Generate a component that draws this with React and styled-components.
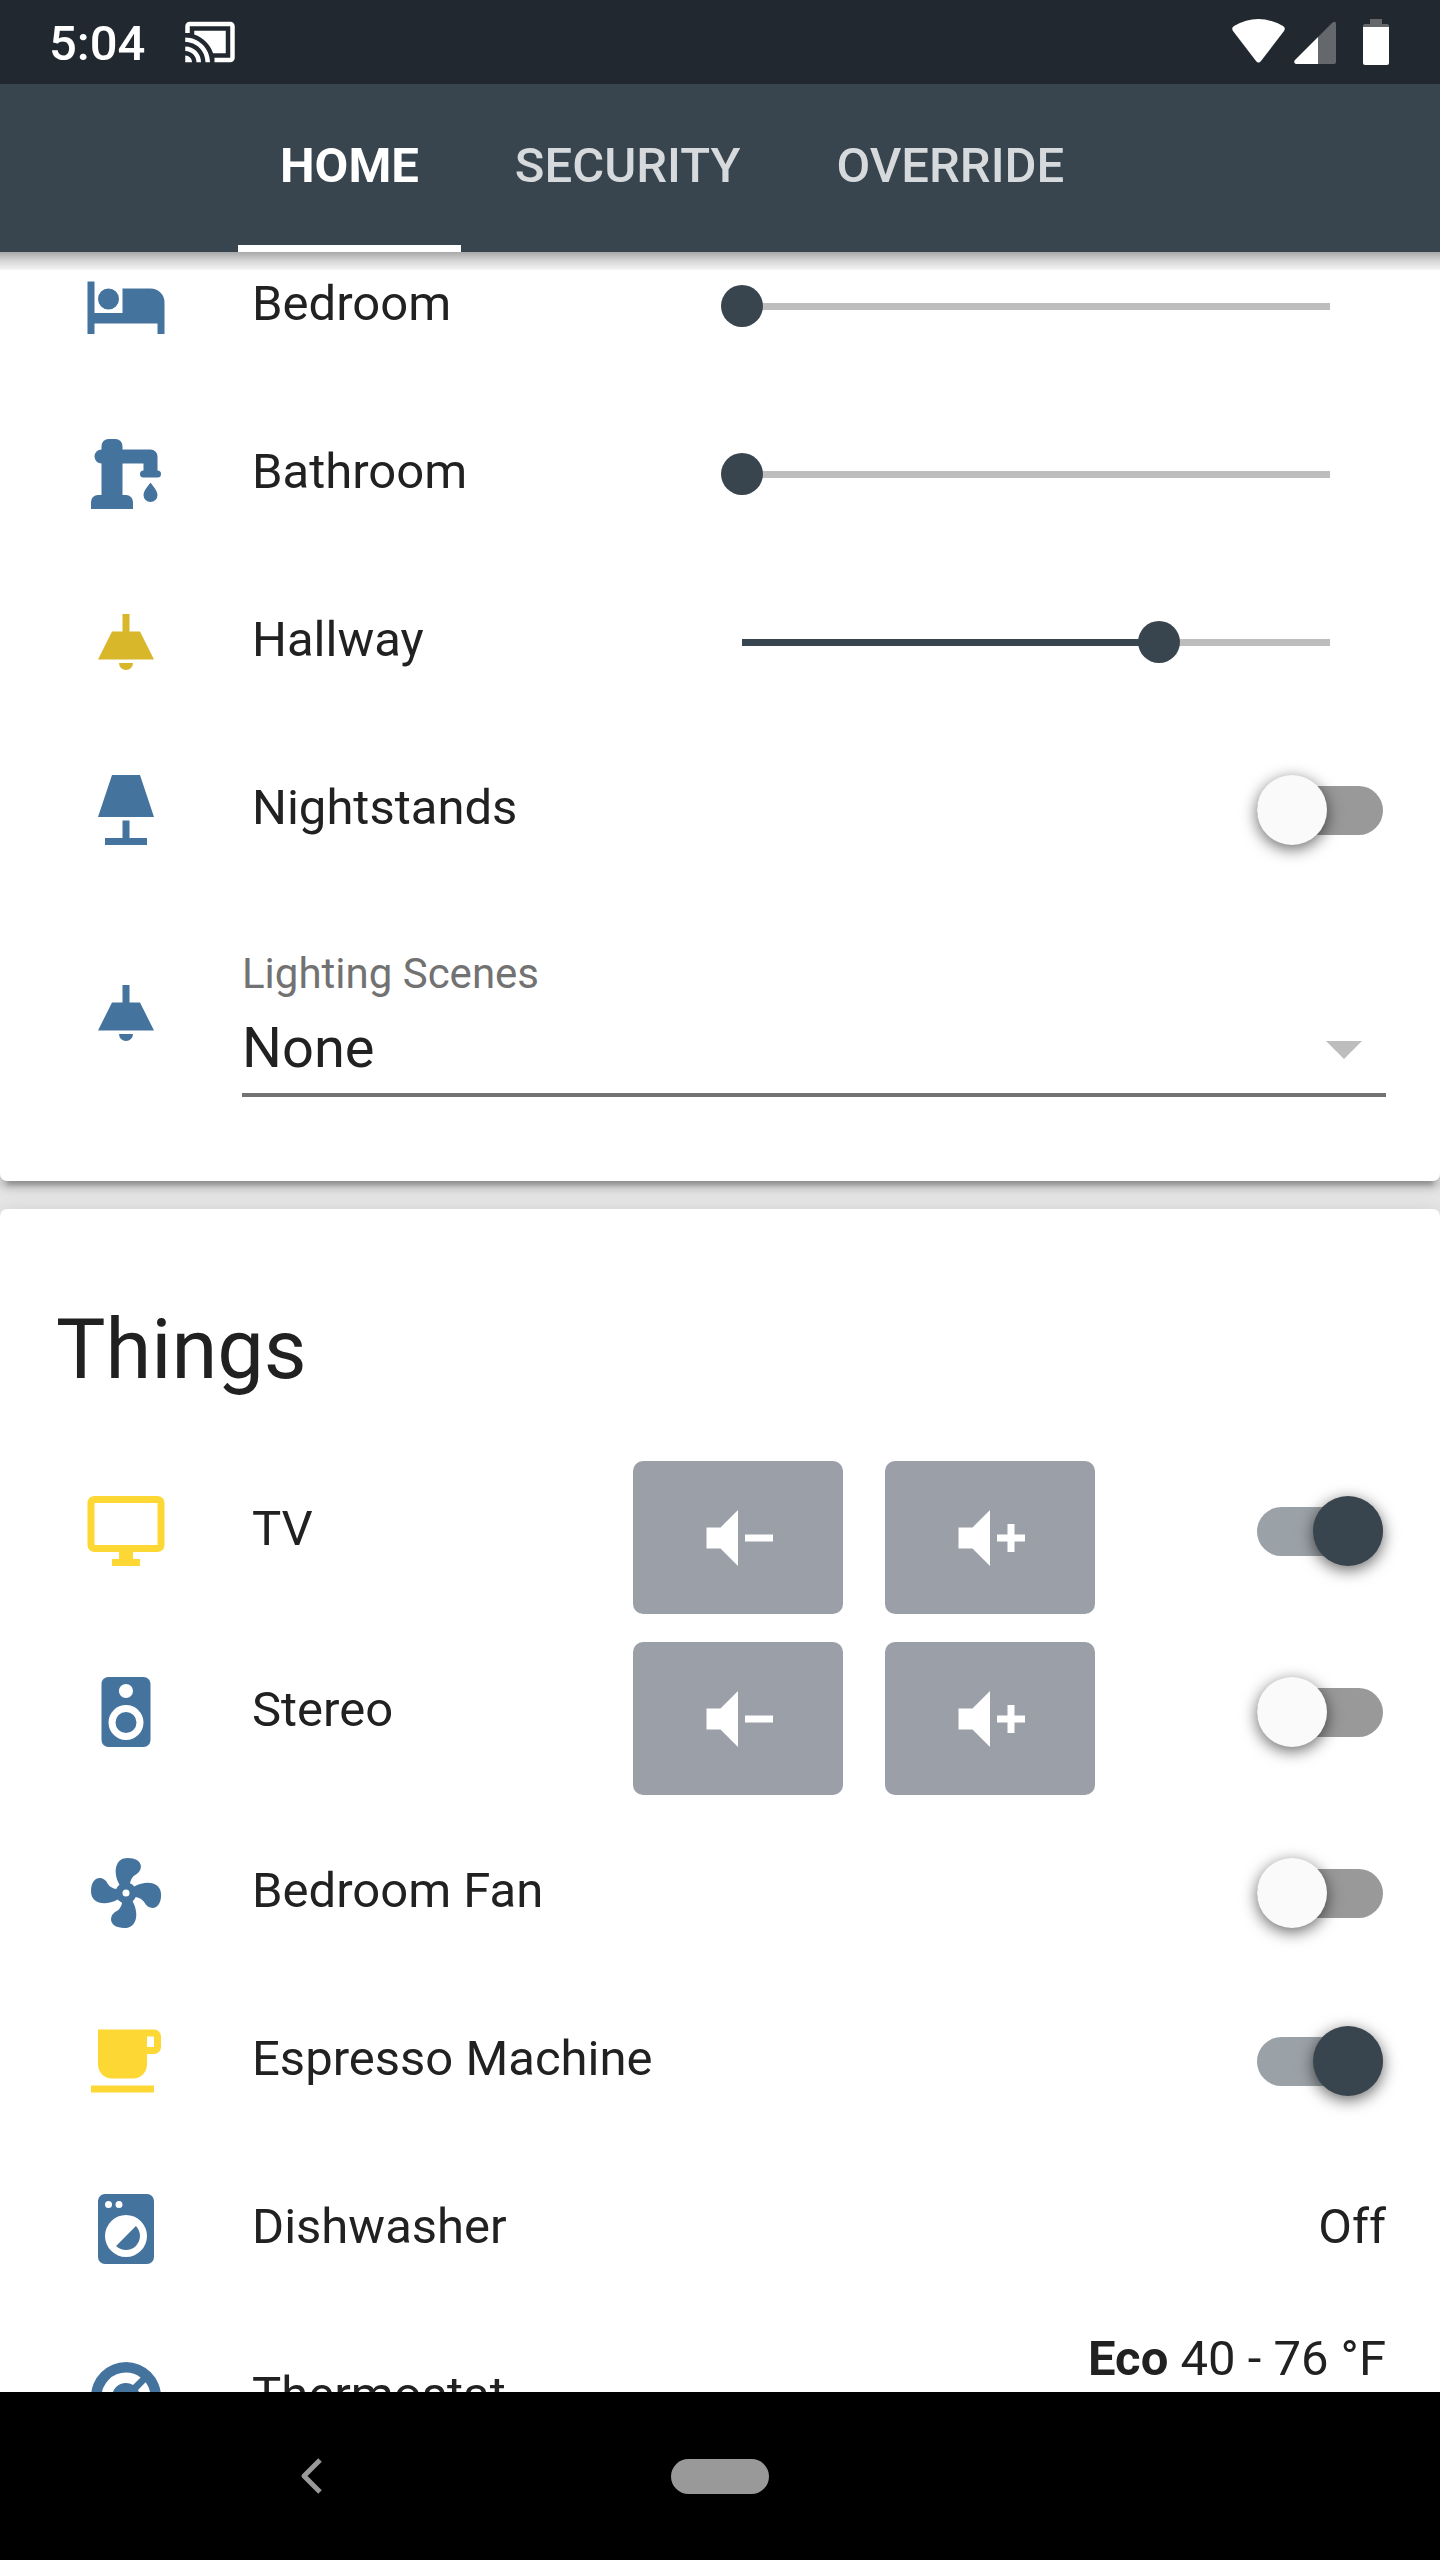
import React, { useState } from "react";
import styled, { createGlobalStyle } from "styled-components";

const color = {
  primary: "#38454f",
  statusBar: "#21282f",
  page: "#e5e5e5",
  text: "#212121",
  secondary: "#727272",
  idle: "#44739e",
  active: "#fdd835",
  dimmed: "#d8b72b",
  track: "#bdbdbd",
};

const GlobalStyle = createGlobalStyle`
  *, *::before, *::after { box-sizing: border-box; }
  body {
    margin: 0;
    background: ${color.page};
    color: ${color.text};
    font-family: Roboto, "Liberation Sans", sans-serif;
    font-size: 49px;
  }
  button, input, select { margin: 0; font: inherit; color: inherit; }
`;

const paths = {
  bed: "M19,7H11V14H3V5H1V20H3V17H21V20H23V11A4,4 0 0,0 19,7M7,13A3,3 0 0,0 10,10A3,3 0 0,0 7,7A3,3 0 0,0 4,10A3,3 0 0,0 7,13Z",
  pump: "M19,14.5C19,14.5 21,16.67 21,18A2,2 0 0,1 19,20A2,2 0 0,1 17,18C17,16.67 19,14.5 19,14.5M5,18V9A2,2 0 0,1 3,7A2,2 0 0,1 5,5V4A2,2 0 0,1 7,2H9A2,2 0 0,1 11,4V5H19A2,2 0 0,1 21,7V9L21,11A1,1 0 0,1 22,12A1,1 0 0,1 21,13H17A1,1 0 0,1 16,12A1,1 0 0,1 17,11V9H11V18H12A2,2 0 0,1 14,20V22H2V20A2,2 0 0,1 4,18H5Z",
  ceiling: "M8,9H11V4H13V9H16L20,17H4L8,9M14,18A2,2 0 0,1 12,20A2,2 0 0,1 10,18H14Z",
  lamp: "M8,2H16L20,14H4L8,2M11,15H13V20H18V22H6V20H11V15Z",
  monitor: "M21,16H3V4H21M21,2H3C1.89,2 1,2.89 1,4V16A2,2 0 0,0 3,18H10V20H8V22H16V20H14V18H21A2,2 0 0,0 23,16V4C23,2.89 22.1,2 21,2Z",
  speaker: "M12,12A3,3 0 0,0 9,15A3,3 0 0,0 12,18A3,3 0 0,0 15,15A3,3 0 0,0 12,12M12,20A5,5 0 0,1 7,15A5,5 0 0,1 12,10A5,5 0 0,1 17,15A5,5 0 0,1 12,20M12,4A2,2 0 0,1 14,6A2,2 0 0,1 12,8C10.89,8 10,7.1 10,6C10,4.89 10.89,4 12,4M17,2H7C5.89,2 5,2.89 5,4V20A2,2 0 0,0 7,22H17A2,2 0 0,0 19,20V4C19,2.89 18.1,2 17,2Z",
  fan: "M12,11A1,1 0 0,0 11,12A1,1 0 0,0 12,13A1,1 0 0,0 13,12A1,1 0 0,0 12,11M12.5,2C17,2 17.11,5.57 14.75,6.75C13.76,7.24 13.32,8.29 13.13,9.22C13.61,9.42 14.03,9.73 14.35,10.13C18.05,8.13 22.03,8.92 22.03,12.5C22.03,17 18.46,17.1 17.28,14.73C16.78,13.74 15.72,13.3 14.79,13.11C14.59,13.59 14.28,14 13.88,14.34C15.87,18.03 15.08,22 11.5,22C7,22 6.91,18.42 9.27,17.24C10.25,16.75 10.69,15.71 10.89,14.79C10.4,14.59 9.97,14.27 9.65,13.87C5.96,15.85 2,15.07 2,11.5C2,7 5.56,6.89 6.74,9.26C7.24,10.25 8.29,10.68 9.22,10.87C9.41,10.39 9.73,9.97 10.14,9.65C8.15,5.96 8.94,2 12.5,2Z",
  coffee: "M2,21H20V19H2M20,8H18V5H20M20,3H4V13A4,4 0 0,0 8,17H14A4,4 0 0,0 18,13V10H20A2,2 0 0,0 22,8V5C22,3.89 21.1,3 20,3Z",
  washer: "M14.83,11.17C16.39,12.73 16.39,15.27 14.83,16.83C13.27,18.39 10.73,18.39 9.17,16.83L14.83,11.17M6,2H18A2,2 0 0,1 20,4V20A2,2 0 0,1 18,22H6A2,2 0 0,1 4,20V4A2,2 0 0,1 6,2M7,4A1,1 0 0,0 6,5A1,1 0 0,0 7,6A1,1 0 0,0 8,5A1,1 0 0,0 7,4M10,4A1,1 0 0,0 9,5A1,1 0 0,0 10,6A1,1 0 0,0 11,5A1,1 0 0,0 10,4M12,8A6,6 0 0,0 6,14A6,6 0 0,0 12,20A6,6 0 0,0 18,14A6,6 0 0,0 12,8Z",
  thermostat: "M16.95,16.95L14.83,14.83C15.55,14.1 16,13.1 16,12C16,11.26 15.79,10.57 15.43,10L17.6,7.81C18.5,9 19,10.43 19,12C19,13.93 18.22,15.68 16.95,16.95M12,5C13.57,5 15,5.5 16.19,6.4L14,8.56C13.43,8.21 12.74,8 12,8A4,4 0 0,0 8,12C8,13.1 8.45,14.1 9.17,14.83L7.05,16.95C5.78,15.68 5,13.93 5,12A7,7 0 0,1 12,5M12,2A10,10 0 0,0 2,12A10,10 0 0,0 12,22A10,10 0 0,0 22,12A10,10 0 0,0 12,2Z",
  volumeMinus: "M3,9H7L12,4V20L7,15H3V9M14,11H22V13H14V11Z",
  volumePlus: "M3,9H7L12,4V20L7,15H3V9M14,11H17V8H19V11H22V13H19V16H17V13H14V11Z",
  cast: "M1 18v3h3c0-1.66-1.34-3-3-3zm0-4v2c2.76 0 5 2.24 5 5h2c0-3.87-3.13-7-7-7zm18-7H5v1.63c3.96 1.28 7.09 4.41 8.37 8.37H19V7zM1 10v2c4.97 0 9 4.03 9 9h2c0-6.08-4.93-11-11-11zm20-7H3c-1.1 0-2 .9-2 2v3h2V5h18v14h-7v2h7c1.1 0 2-.9 2-2V5c0-1.1-.9-2-2-2z",
};

function Icon({ name, size = 84 }) {
  return (
    <svg width={size} height={size} viewBox="0 0 24 24" fill="currentColor" aria-hidden="true">
      <path d={paths[name]} />
    </svg>
  );
}

const Screen = styled.div`
  display: flex;
  flex-direction: column;
  height: 100vh;
`;

const StatusBar = styled.div`
  display: flex;
  flex: none;
  align-items: center;
  justify-content: space-between;
  height: 84px;
  padding: 0 51px 0 49px;
  background: ${color.statusBar};
  color: #fff;
  font-weight: 500;
`;

const StatusGroup = styled.div`
  display: flex;
  align-items: center;
  gap: ${(p) => p.$gap}px;
`;

const Clock = styled.span`
  padding-top: 2px;
`;

const Header = styled.header`
  position: relative;
  z-index: 1;
  flex: none;
  padding: 0 238px;
  background: ${color.primary};

  &::after {
    content: "";
    position: absolute;
    inset: 100% 0 auto;
    height: 18px;
    background: linear-gradient(rgba(0, 0, 0, 0.34), rgba(0, 0, 0, 0.16) 50%, rgba(0, 0, 0, 0.04));
    pointer-events: none;
  }
`;

const Tabs = styled.nav`
  display: flex;
  gap: 12px;
  height: 168px;
`;

const Tab = styled.button`
  padding: 0 42px 4px;
  border: solid transparent;
  border-width: 7px 0;
  border-bottom-color: ${(p) => (p.$selected ? "#fff" : "transparent")};
  background: none;
  color: ${(p) => (p.$selected ? "#fff" : "#d7dadc")};
  font-weight: ${(p) => (p.$selected ? 700 : 500)};
  text-transform: uppercase;
  line-height: 150px;
`;

const Content = styled.main`
  display: flex;
  flex: 1;
  flex-direction: column;
  gap: 28px;
  min-height: 0;
  overflow: hidden;
`;

const Card = styled.section`
  flex: none;
  padding: 0 54px 63px 56px;
  border-radius: 7px;
  background: #fff;
  box-shadow: 0 7px 7px rgba(0, 0, 0, 0.14), 0 4px 18px rgba(0, 0, 0, 0.12),
    0 11px 4px -7px rgba(0, 0, 0, 0.2);

  /* the list is scrolled slightly under the header */
  &:first-child { margin-top: -16px; }
`;

const CardTitle = styled.h1`
  margin: 0;
  padding: 86px 0 56px;
  font-size: 83px;
  font-weight: 400;
  line-height: 110px;
`;

const Rows = styled.div`
  display: flex;
  flex-direction: column;
  gap: 28px;
`;

const Row = styled.div`
  display: flex;
  align-items: flex-start;
  gap: 46px;
  min-height: ${(p) => (p.$tall ? 210 : 140)}px;
`;

const RowIcon = styled.div`
  display: grid;
  flex: none;
  place-items: center;
  width: 140px;
  height: ${(p) => (p.$tall ? 210 : 140)}px;
  color: ${(p) => p.$color};
`;

const RowName = styled.label`
  flex: 1;
  padding-left: 10px;
  line-height: 136px;
  white-space: nowrap;
`;

const Control = styled.div`
  display: flex;
  align-items: center;
  height: 140px;
  margin-right: 3px;
`;

const Slider = styled.input`
  width: 630px;
  height: 42px;
  margin-right: 32px;
  appearance: none;
  background: linear-gradient(
      to right,
      ${color.primary} var(--fill),
      ${color.track} var(--fill)
    )
    center / calc(100% - 42px) 7px no-repeat;

  &::-webkit-slider-thumb {
    width: 42px;
    height: 42px;
    border: 0;
    border-radius: 50%;
    appearance: none;
    background: ${color.primary};
  }
`;

const Switch = styled.input`
  display: flex;
  align-items: center;
  width: 126px;
  height: 49px;
  appearance: none;
  border-radius: 25px;
  background: #999;

  &::before {
    content: "";
    flex: none;
    width: 70px;
    height: 70px;
    border-radius: 50%;
    background: #fafafa;
    box-shadow: 0 4px 16px rgba(0, 0, 0, 0.6);
  }

  &:checked {
    justify-content: flex-end;
    background: #9ba2a7;
  }

  &:checked::before { background: ${color.primary}; }
`;

const VolumeButtons = styled.div`
  display: flex;
  gap: 42px;
  margin-right: 116px;
`;

const VolumeButton = styled.button`
  display: grid;
  place-items: center;
  width: 210px;
  height: 153px;
  padding: 0;
  border: 0;
  border-radius: 10px;
  background: #9b9fa8;
  color: #fff;
`;

const RowState = styled.div`
  line-height: ${(p) => (p.$lines ? 64 : 136)}px;
  white-space: nowrap;
`;

const Field = styled.div`
  flex: 1;
  padding-top: 33px;
`;

const FieldLabel = styled.label`
  display: block;
  color: ${color.secondary};
  font-size: 42px;
  line-height: 66px;
`;

const SelectBox = styled.div`
  display: grid;
  align-items: center;

  > * { grid-area: 1 / 1; }
  > svg {
    justify-self: end;
    margin: 0 24px 4px 0;
    color: ${color.track};
    pointer-events: none;
  }
`;

const Select = styled.select`
  width: 100%;
  height: 90px;
  padding: 0 0 5px;
  border: 0;
  border-bottom: 4px solid ${color.secondary};
  border-radius: 0;
  appearance: none;
  background: none;
  font-size: 56px;
`;

const SystemNav = styled.nav`
  display: grid;
  flex: none;
  grid-template-columns: repeat(3, 409px);
  place-content: center;
  place-items: center;
  height: 168px;
  background: #000;
  color: #999;
`;

const NavButton = styled.button`
  display: grid;
  place-items: center;
  width: 98px;
  height: 98px;
  padding: 0;
  border: 0;
  background: none;
`;

const HomePill = styled.span`
  width: 98px;
  height: 35px;
  border-radius: 18px;
  background: currentColor;
`;

function SliderRow({ id, icon, name, initial, iconColor = color.idle }) {
  const [value, setValue] = useState(initial);
  return (
    <Row>
      <RowIcon $color={iconColor}><Icon name={icon} /></RowIcon>
      <RowName htmlFor={id}>{name}</RowName>
      <Control>
        <Slider
          id={id}
          type="range"
          min="0"
          max="100"
          value={value}
          onChange={(e) => setValue(Number(e.target.value))}
          style={{ "--fill": `${value}%` }}
        />
      </Control>
    </Row>
  );
}

function SwitchRow({ id, icon, name, initial = false, volume = false }) {
  const [on, setOn] = useState(initial);
  return (
    <Row>
      <RowIcon $color={on ? color.active : color.idle}><Icon name={icon} /></RowIcon>
      <RowName htmlFor={id}>{name}</RowName>
      {volume && (
        <VolumeButtons>
          <VolumeButton type="button" aria-label={`${name} volume down`}>
            <Icon name="volumeMinus" />
          </VolumeButton>
          <VolumeButton type="button" aria-label={`${name} volume up`}>
            <Icon name="volumePlus" />
          </VolumeButton>
        </VolumeButtons>
      )}
      <Control>
        <Switch id={id} type="checkbox" checked={on} onChange={(e) => setOn(e.target.checked)} />
      </Control>
    </Row>
  );
}

export default function App() {
  const [tab, setTab] = useState("Home");
  return (
    <Screen>
      <GlobalStyle />
      <StatusBar>
        <StatusGroup $gap={38}>
          <Clock>5:04</Clock>
          <Icon name="cast" size={54} />
        </StatusGroup>
        <StatusGroup $gap={9}>
          <svg width="53" height="46" viewBox="0 0 53 46" fill="currentColor" aria-hidden="true">
            <path d="M1 12Q-1 9 2 7Q26 -7 51 7Q54 9 52 12L29 42Q26.500 45 24 42Z" />
          </svg>
          <svg width="60" height="46" viewBox="0 0 60 46" fill="currentColor" aria-hidden="true">
            <path opacity=".3" d="M24 18L38 4Q42 1 42 5V43Q42 45 40 45H24Z" />
            <path d="M24 18V45H2Q-1 44 1 41Z" />
          </svg>
          <svg width="26" height="46" viewBox="0 0 26 46" fill="currentColor" aria-hidden="true">
            <path opacity=".3" d="M0 8V7Q0 5 2 5H7V0H19V5H24Q26 5 26 7V8Z" />
            <path d="M0 8H26V44Q26 46 24 46H2Q0 46 0 44Z" />
          </svg>
        </StatusGroup>
      </StatusBar>

      <Header>
        <Tabs>
          {["Home", "Security", "Override"].map((t) => (
            <Tab key={t} type="button" $selected={t === tab} onClick={() => setTab(t)}>
              {t}
            </Tab>
          ))}
        </Tabs>
      </Header>

      <Content>
        <Card>
          <Rows>
            <SliderRow id="bedroom" icon="bed" name="Bedroom" initial={0} />
            <SliderRow id="bathroom" icon="pump" name="Bathroom" initial={0} />
            <SliderRow id="hallway" icon="ceiling" name="Hallway" initial={71} iconColor={color.dimmed} />
            <SwitchRow id="nightstands" icon="lamp" name="Nightstands" />
            <Row $tall>
              <RowIcon $tall $color={color.idle}><Icon name="ceiling" /></RowIcon>
              <Field>
                <FieldLabel htmlFor="scenes">Lighting Scenes</FieldLabel>
                <SelectBox>
                  <Select id="scenes" defaultValue="None">
                    <option>None</option>
                  </Select>
                  <svg width="36" height="18" viewBox="0 0 36 18" fill="currentColor" aria-hidden="true">
                    <path d="M0 0H36L18 18Z" />
                  </svg>
                </SelectBox>
              </Field>
            </Row>
          </Rows>
        </Card>

        <Card>
          <CardTitle>Things</CardTitle>
          <Rows>
            <SwitchRow id="tv" icon="monitor" name="TV" initial volume />
            <SwitchRow id="stereo" icon="speaker" name="Stereo" volume />
            <SwitchRow id="fan" icon="fan" name="Bedroom Fan" />
            <SwitchRow id="espresso" icon="coffee" name="Espresso Machine" initial />
            <Row>
              <RowIcon $color={color.idle}><Icon name="washer" /></RowIcon>
              <RowName as="span">Dishwasher</RowName>
              <RowState>Off</RowState>
            </Row>
            <Row>
              <RowIcon $color={color.idle}><Icon name="thermostat" /></RowIcon>
              <RowName as="span">Thermostat</RowName>
              <RowState $lines><b>Eco</b> 40 - 76 °F</RowState>
            </Row>
          </Rows>
        </Card>
      </Content>

      <SystemNav>
        <NavButton type="button" aria-label="Back">
          <svg width="22" height="36" viewBox="0 0 22 36" fill="none" stroke="currentColor" strokeWidth="5" aria-hidden="true">
            <path d="M20 2L4 18L20 34" strokeLinejoin="round" />
          </svg>
        </NavButton>
        <NavButton type="button" aria-label="Home"><HomePill /></NavButton>
      </SystemNav>
    </Screen>
  );
}
